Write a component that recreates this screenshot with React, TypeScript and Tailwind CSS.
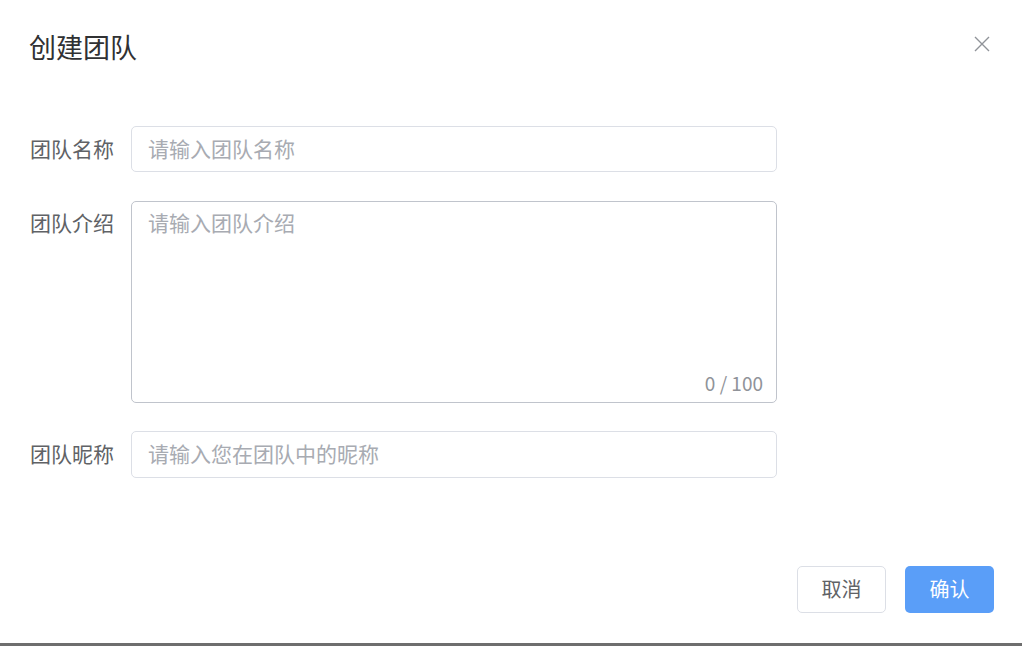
import React from "react";

const font = { fontFamily: '"Noto Sans CJK SC", "Noto Sans", sans-serif' };

export default function App() {
  return (
    <div
      style={font}
      className="w-[1022px] h-[646px] bg-white border-b-[3px] border-[#6e6e6e] flex flex-col box-border"
    >
      <div className="flex items-start justify-between pl-[29px] pr-[31px] pt-[30px]">
        <div className="text-[27px] leading-[34px] text-[#303133]">创建团队</div>
        <svg width="18" height="18" viewBox="0 0 18 18" className="mt-[5px]">
          <path d="M2 2L16 16M16 2L2 16" stroke="#909399" strokeWidth="1.4" fill="none" />
        </svg>
      </div>

      <div className="mt-[62px] flex flex-col pl-[30px]">
        <div className="flex items-center h-[46px]">
          <div className="w-[101px] text-[21px] text-[#606266] leading-[42px] pb-[3px]">团队名称</div>
          <input
            placeholder="请输入团队名称"
            className="w-[646px] h-[46px] border border-[#dcdfe6] rounded-[5px] px-[16px] pb-[3px] text-[21px] text-[#606266] placeholder:text-[#a8abb2] outline-none"
            style={font}
          />
        </div>

        <div className="flex items-start mt-[29px]">
          <div className="w-[101px] text-[21px] text-[#606266] leading-[42px]">团队介绍</div>
          <div className="relative w-[646px] h-[202px]">
            <textarea
              placeholder="请输入团队介绍"
              className="w-full h-full resize-none border border-[#c0c4cc] rounded-[5px] px-[16px] py-[5px] text-[21px] leading-[30px] text-[#606266] placeholder:text-[#a8abb2] outline-none"
              style={font}
            />
            <span className="absolute right-[14px] bottom-[8px] text-[19px] leading-[24px] text-[#909399]">
              0 / 100
            </span>
          </div>
        </div>

        <div className="flex items-center h-[47px] mt-[28px]">
          <div className="w-[101px] text-[21px] text-[#606266] leading-[42px] pb-[3px]">团队昵称</div>
          <input
            placeholder="请输入您在团队中的昵称"
            className="w-[646px] h-[47px] border border-[#dcdfe6] rounded-[5px] px-[16px] pb-[3px] text-[21px] text-[#606266] placeholder:text-[#a8abb2] outline-none"
            style={font}
          />
        </div>
      </div>

      <div className="flex justify-end gap-[19px] pr-[28px] mt-[88px]">
        <button
          className="w-[89px] h-[47px] border border-[#dcdfe6] rounded-[5px] bg-white text-[20px] text-[#606266] pb-[2px]"
          style={font}
        >
          取消
        </button>
        <button
          className="w-[89px] h-[47px] rounded-[5px] bg-[#5a9ef8] text-[20px] text-white pb-[2px]"
          style={font}
        >
          确认
        </button>
      </div>
    </div>
  );
}
